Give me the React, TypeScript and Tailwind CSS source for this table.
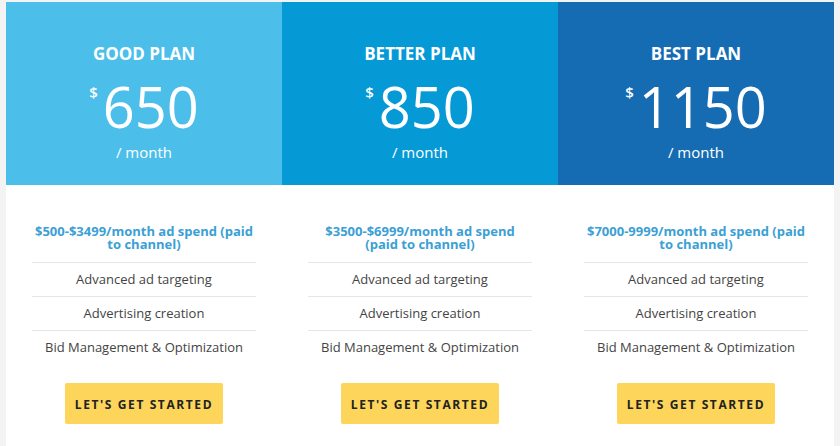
import React from "react";

type Plan = {
  name: string;
  price: string;
  spend: string;
  headerBg: string;
};

const plans: Plan[] = [
  {
    name: "GOOD PLAN",
    price: "650",
    spend: "$500-$3499/month ad spend (paid to channel)",
    headerBg: "bg-[#4bbeea]",
  },
  {
    name: "BETTER PLAN",
    price: "850",
    spend: "$3500-$6999/month ad spend (paid to channel)",
    headerBg: "bg-[#0599d6]",
  },
  {
    name: "BEST PLAN",
    price: "1150",
    spend: "$7000-9999/month ad spend (paid to channel)",
    headerBg: "bg-[#156cb2]",
  },
];

const features = [
  "Advanced ad targeting",
  "Advertising creation",
  "Bid Management & Optimization",
];

const PlanColumn: React.FC<{ plan: Plan }> = ({ plan }) => {
  return (
    <div className="flex flex-col">
      {/* header */}
      <div className={`${plan.headerBg} h-[183px] flex flex-col items-center pt-[40px] text-white`}>
        <div className="text-[17px] leading-[24px] font-bold">{plan.name}</div>
        <div className="flex items-start mt-[12px] h-[57px]">
          <span className="text-[15px] leading-[15px] font-semibold mt-[7px] mr-[5px]">$</span>
          <span className="text-[56px] leading-[57px]">{plan.price}</span>
        </div>
        <div className="text-[15px] leading-[20px] mt-[7px]">/ month</div>
      </div>

      {/* body */}
      <div className="bg-white flex flex-col items-center px-[26px] pt-[40px]">
        <div className="w-full text-center text-[13px] leading-[13px] font-bold text-[#3ba0d5] pb-[11px]">
          {plan.spend}
        </div>
        {features.map((f) => (
          <div
            key={f}
            className="w-full h-[34px] flex items-center justify-center border-t border-[#e6e6e6] text-[13px] text-[#444]"
          >
            {f}
          </div>
        ))}
        <button className="mt-[19px] w-[158px] h-[41px] pt-[3px] bg-[#fdd55b] rounded-[2px] text-[12px] font-bold tracking-[1.6px] text-[#222]">
          LET'S GET STARTED
        </button>
      </div>
    </div>
  );
};

export default function App() {
  return (
    <div
      className="w-[840px] h-[446px] overflow-hidden bg-[#f3f3f3] pt-[2px] pl-[6px]"
      style={{ fontFamily: '"Open Sans", "Liberation Sans", sans-serif' }}
    >
      <div className="w-[828px] h-[460px] bg-white grid grid-cols-3">
        {plans.map((p) => (
          <PlanColumn key={p.name} plan={p} />
        ))}
      </div>
    </div>
  );
}
